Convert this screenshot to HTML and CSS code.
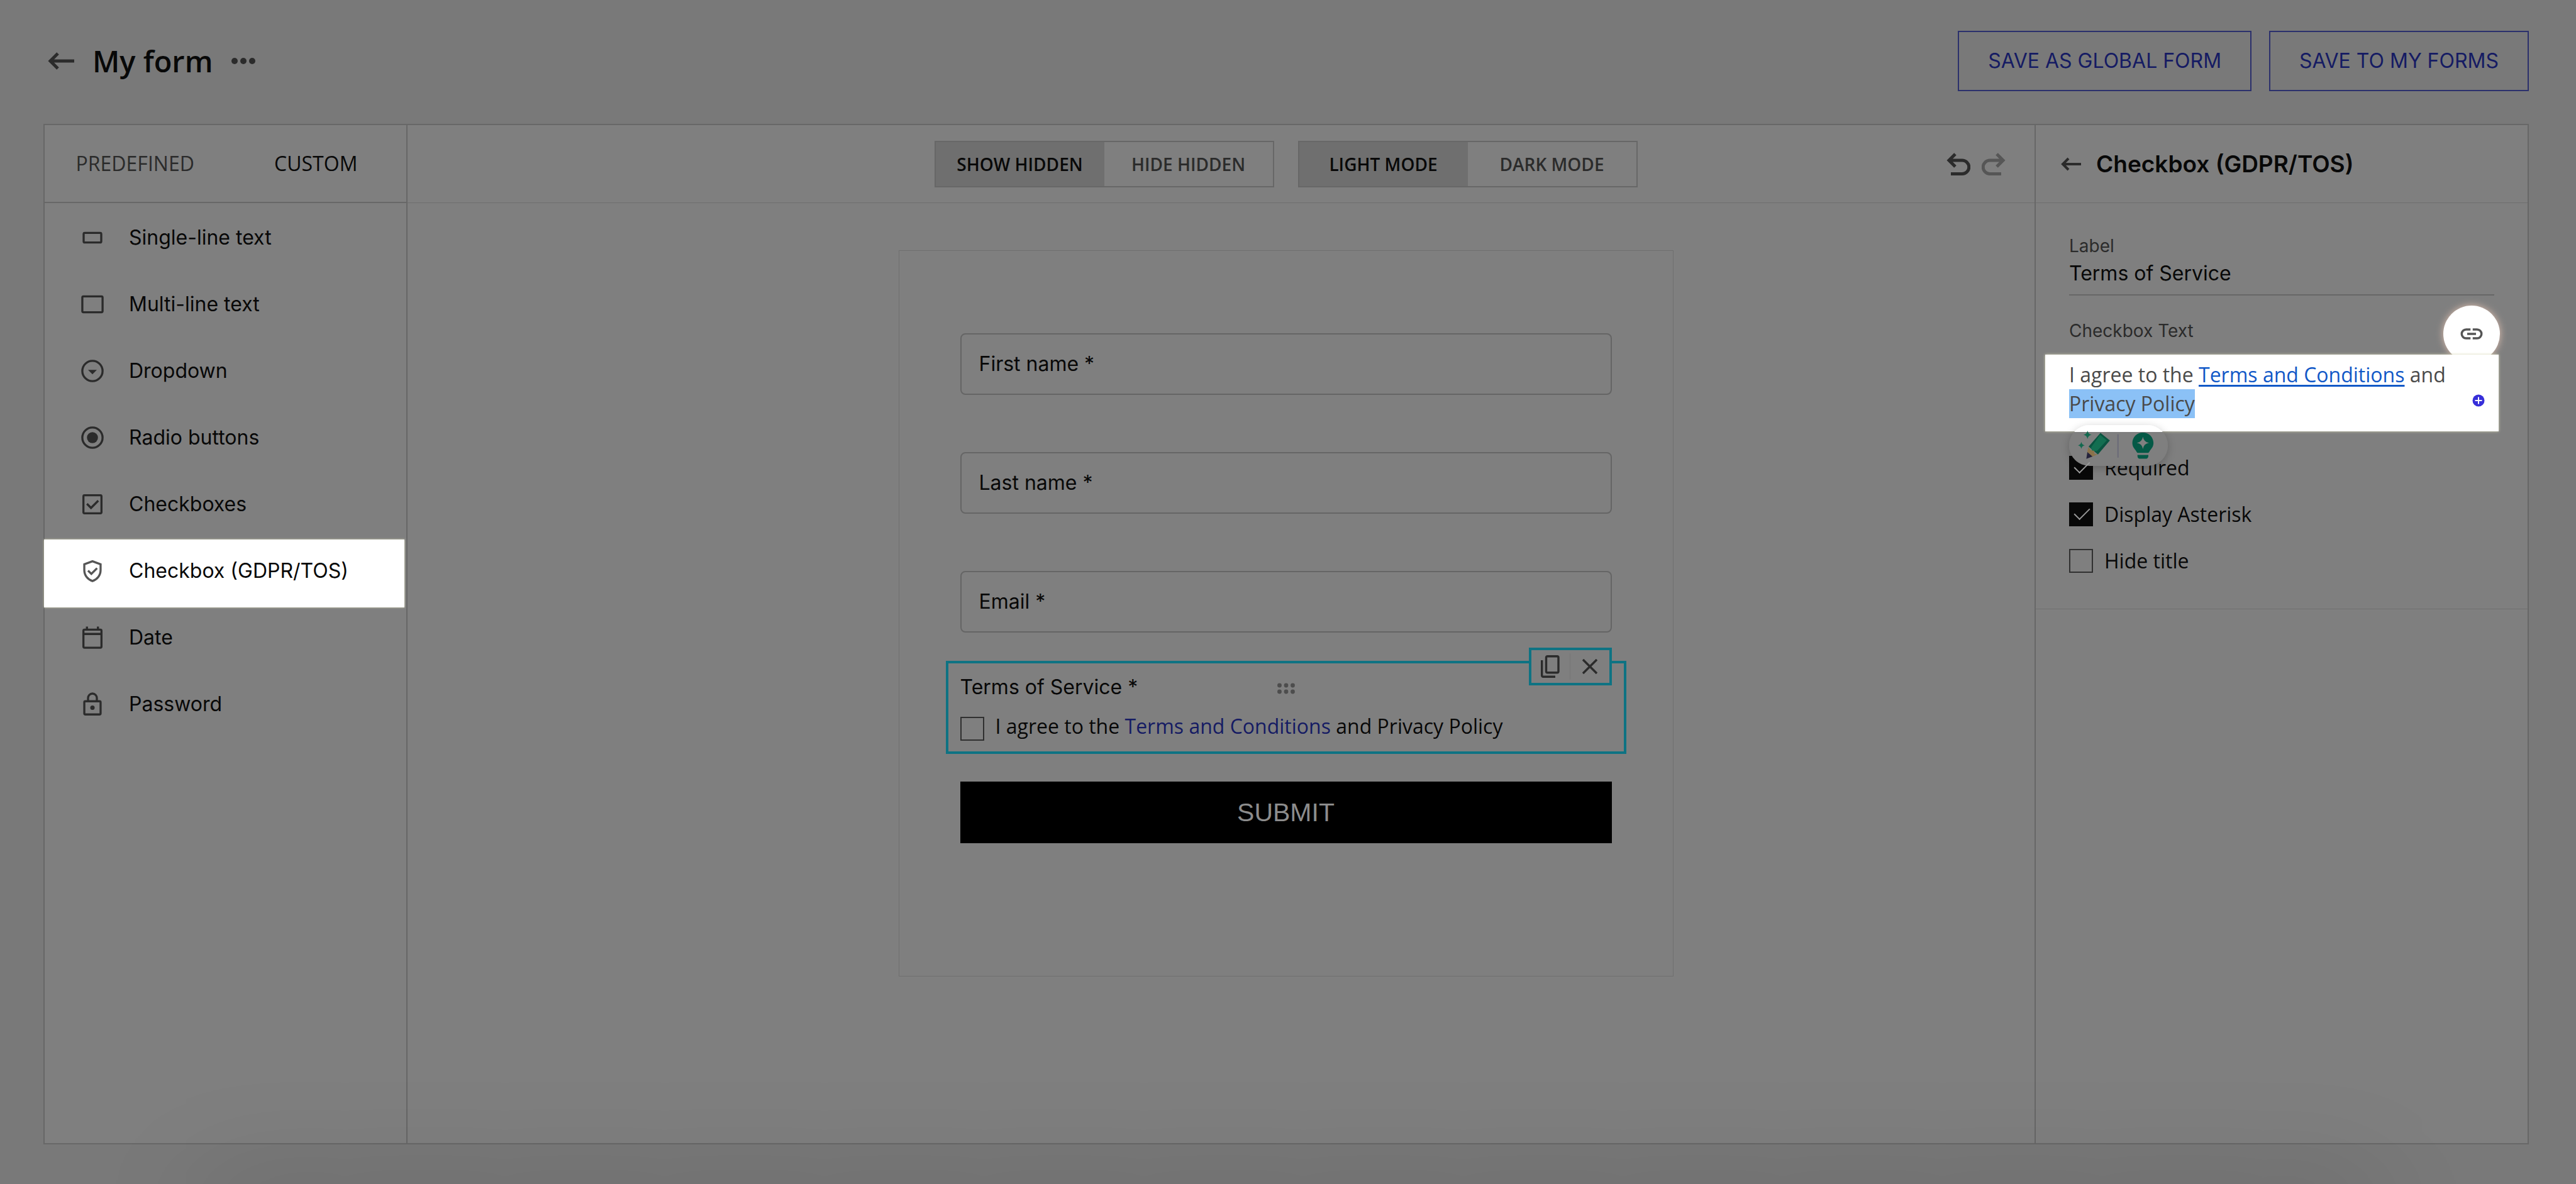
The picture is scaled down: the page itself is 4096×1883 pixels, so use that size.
FILE: index.html
```html
<!DOCTYPE html>
<html lang="en">
<head>
<meta charset="utf-8">
<meta name="viewport" content="width=device-width, initial-scale=1">
<title>My form</title>
<link rel="stylesheet" href="styles.css">
</head>
<body>
<header class="page-header">
  <button class="icon-btn" type="button" aria-label="Back">
    <svg width="42" height="28" viewBox="0 0 42 28" fill="none" stroke="currentColor" stroke-width="5"><path d="M42 14H4M16 2 4 14l12 12"/></svg>
  </button>
  <h1 class="page-title">My form</h1>
  <button class="icon-btn" type="button" aria-label="More options">
    <svg width="40" height="12" viewBox="0 0 40 12" fill="currentColor"><circle cx="6" cy="6" r="5"/><circle cx="20" cy="6" r="5"/><circle cx="34" cy="6" r="5"/></svg>
  </button>
  <div class="page-actions">
    <button class="outline-btn" type="button">SAVE AS GLOBAL FORM</button>
    <button class="outline-btn" type="button">SAVE TO MY FORMS</button>
  </div>
</header>

<main class="builder">
  <aside class="sidebar">
    <nav class="tabs">
      <button class="tab" type="button">PREDEFINED</button>
      <button class="tab tab-active" type="button">CUSTOM</button>
    </nav>
    <ul class="elements">
      <li><button class="element" type="button">
        <svg class="element-icon" viewBox="0 0 24 24"><rect x="4" y="7.6" width="16" height="8.8" rx="1"/></svg>Single-line text</button></li>
      <li><button class="element" type="button">
        <svg class="element-icon" viewBox="0 0 24 24"><rect x="2.8" y="4.8" width="18.4" height="14.4" rx="1"/></svg>Multi-line text</button></li>
      <li><button class="element" type="button">
        <svg class="element-icon" viewBox="0 0 24 24"><circle cx="12" cy="12" r="9.2"/><path class="solid" d="M8 11h8l-4 4z"/></svg>Dropdown</button></li>
      <li><button class="element" type="button">
        <svg class="element-icon" viewBox="0 0 24 24"><circle cx="12" cy="12" r="9.2"/><circle class="solid" cx="12" cy="12" r="5"/></svg>Radio buttons</button></li>
      <li><button class="element" type="button">
        <svg class="element-icon" viewBox="0 0 24 24"><rect x="3.8" y="3.8" width="16.4" height="16.4" rx="1"/><path d="m7 11.6 3.7 3.7 6.6-6.6"/></svg>Checkboxes</button></li>
      <li><button class="element element-selected" type="button">
        <svg class="element-icon" viewBox="0 0 24 24"><path d="M12 3.2 4.6 5.9v5.4c0 4.6 3 8.4 7.4 9.9 4.4-1.5 7.4-5.3 7.4-9.9V5.9z"/><path d="m8 11.7 3 3 5.2-5.2"/></svg>Checkbox (GDPR/TOS)</button></li>
      <li><button class="element" type="button">
        <svg class="element-icon" viewBox="0 0 24 24"><rect x="3.8" y="4.8" width="16.4" height="16.4" rx="1"/><path d="M4 8.7h16M7 2v3M17 2v3"/></svg>Date</button></li>
      <li><button class="element" type="button">
        <svg class="element-icon" viewBox="0 0 24 24"><rect x="4.6" y="9.3" width="14.8" height="12" rx="1"/><path d="M8 9V6.3a4 4 0 0 1 8 0V9"/><circle class="solid" cx="12" cy="15.2" r="2"/></svg>Password</button></li>
    </ul>
  </aside>

  <section class="canvas">
    <div class="canvas-bar">
      <div class="toggles">
        <div class="toggle">
          <button class="toggle-option toggle-on" type="button">SHOW HIDDEN</button>
          <button class="toggle-option" type="button">HIDE HIDDEN</button>
        </div>
        <div class="toggle">
          <button class="toggle-option toggle-on" type="button">LIGHT MODE</button>
          <button class="toggle-option" type="button">DARK MODE</button>
        </div>
      </div>
      <div class="history">
        <button class="icon-btn" type="button" aria-label="Undo">
          <svg width="38" height="36" viewBox="0 0 38 36" fill="none" stroke="currentColor" stroke-width="5"><path d="M4 12h21a10.5 10.5 0 0 1 0 21.5H7M14 2 4 12l10 10"/></svg>
        </button>
        <button class="icon-btn icon-faded" type="button" aria-label="Redo">
          <svg width="38" height="36" viewBox="0 0 38 36" fill="none" stroke="currentColor" stroke-width="5"><path d="M34 12H13a10.5 10.5 0 0 0 0 21.5h18M24 2l10 10-10 10"/></svg>
        </button>
      </div>
    </div>
    <div class="canvas-body">
      <form class="form-card">
        <label class="field"><span>First name *</span><input type="text" name="first"></label>
        <label class="field"><span>Last name *</span><input type="text" name="last"></label>
        <label class="field"><span>Email *</span><input type="email" name="email"></label>
        <div class="block-selected">
          <div class="block-title">Terms of Service *
            <svg class="drag-dots" width="28" height="18" viewBox="0 0 28 18" fill="currentColor"><circle cx="3.5" cy="4" r="3.4"/><circle cx="14" cy="4" r="3.4"/><circle cx="24.5" cy="4" r="3.4"/><circle cx="3.5" cy="14" r="3.4"/><circle cx="14" cy="14" r="3.4"/><circle cx="24.5" cy="14" r="3.4"/></svg>
          </div>
          <div class="consent">
            <input class="box" type="checkbox" id="consent">
            <label for="consent">I agree to the <a href="#terms">Terms and Conditions</a> and Privacy Policy</label>
          </div>
          <div class="block-tools">
            <button class="icon-btn tool" type="button" aria-label="Duplicate">
              <svg width="32" height="38" viewBox="0 0 32 38" fill="none" stroke="currentColor" stroke-width="3.4"><rect x="9.5" y="2.7" width="19.5" height="26" rx="2"/><path d="M2.7 9v24.3a2 2 0 0 0 2 2H24"/></svg>
            </button>
            <button class="icon-btn tool" type="button" aria-label="Remove">
              <svg width="24" height="24" viewBox="0 0 24 24" fill="none" stroke="currentColor" stroke-width="3.4"><path d="m1 1 22 22M23 1 1 23"/></svg>
            </button>
          </div>
        </div>
        <button class="submit" type="button">SUBMIT</button>
      </form>
    </div>
  </section>

  <aside class="inspector">
    <div class="inspector-head">
      <button class="icon-btn" type="button" aria-label="Back to elements">
        <svg width="32" height="22" viewBox="0 0 32 22" fill="none" stroke="currentColor" stroke-width="4"><path d="M32 11H3M12 2l-9 9 9 9"/></svg>
      </button>
      <h2 class="inspector-title">Checkbox (GDPR/TOS)</h2>
    </div>
    <div class="settings">
      <label class="setting-label" for="label-input">Label</label>
      <input class="line-input" id="label-input" type="text" value="Terms of Service">
      <div class="setting-label" id="text-label">Checkbox Text</div>
      <div class="editor">
        <div class="editor-text" role="textbox" aria-labelledby="text-label" contenteditable="true" spellcheck="false">I agree to the <a class="editor-link" href="#terms">Terms and Conditions</a> and <mark>Privacy Policy</mark></div>
        <button class="link-btn" type="button" aria-label="Insert link">
          <svg width="42" height="42" viewBox="0 0 24 24" fill="none" stroke="currentColor" stroke-width="2"><path d="M11 8H7a4 4 0 0 0 0 8h4M13 8h4a4 4 0 0 1 0 8h-4M8 12h8"/></svg>
        </button>
        <button class="add-btn" type="button" aria-label="Add">
          <svg width="20" height="20" viewBox="0 0 20 20"><circle cx="10" cy="10" r="9.5" fill="#372fd9"/><path d="M10 4.5v11M4.5 10h11" stroke="#fff" stroke-width="2"/></svg>
        </button>
        <div class="assistant">
          <svg viewBox="168 47 654 271" aria-hidden="true">
            <path d="M290 85q5 23 27 27-22 4-27 27-5-23-27-27 22-4 27-27zM249 158q4 19 22 23-18 4-22 23-4-19-22-23 18-4 22-23z" fill="#13694f"/>
            <path d="m376 99 62 50-79 93-62-52z" fill="#0a5340"/>
            <path d="m373 112 45 36-66 72-32-1-6-24z" fill="#136e51"/>
            <path d="m296 193-8 33 34 30 36-15-22-3-2-20-22-4z" fill="#8b734b"/>
            <path d="m289 226 34 29-41 16z" fill="#25233b"/>
            <path d="M492 108v155" stroke="#6b6b78" stroke-width="9"/>
            <path d="M657 97c-40 0-70 31-70 69 0 25 14 37 25 53 4 7 5 12 12 12h66c7 0 8-5 12-12 11-16 25-28 25-53 0-38-30-69-70-69zM621 245h72v8q-3 17-14 17h-44q-12 0-14-17z" fill="#045946"/>
            <path d="M657 125q6 34 40 40-34 6-40 40-6-34-40-40 34-6 40-40z" fill="#808080"/>
          </svg>
        </div>
      </div>
      <div class="options">
        <label class="option"><input class="box" type="checkbox" checked>Required</label>
        <label class="option"><input class="box" type="checkbox" checked>Display Asterisk</label>
        <label class="option"><input class="box" type="checkbox">Hide title</label>
      </div>
    </div>
  </aside>
</main>
</body>
</html>
```
FILE: styles.css
```css
:root {
  --page: #797979;
  --surface: #7f7f7f;
  --line: #676767;
  --line-soft: #6f6f6f;
  --ink: #080808;
  --ink-soft: #2b2b2b;
  --brand: #151b63;
  --select: #0e7383;
  --inter: Inter, "Liberation Sans", sans-serif;
  --open: "Open Sans", "Noto Sans", sans-serif;
}

* { box-sizing: border-box; }

body {
  margin: 0;
  min-height: 100vh;
  display: flex;
  flex-direction: column;
  overflow: hidden;
  background: var(--page);
  color: var(--ink);
  font: 400 32px/40px var(--inter);
}

body::after {
  content: "";
  position: fixed;
  left: 320px;
  right: 320px;
  bottom: -60px;
  height: 40px;
  box-shadow: 0 0 180px 10px rgba(0, 0, 0, .2);
  pointer-events: none;
}

button, input {
  margin: 0;
  padding: 0;
  border: 0;
  background: none;
  color: inherit;
  font: inherit;
}

svg { display: block; }

.icon-btn { color: var(--ink-soft); }
.icon-faded { color: #565656; }

/* Page header */
.page-header {
  display: flex;
  align-items: center;
  padding: 49px 75px 52px 76px;
}

.page-title {
  margin: 0 28px 0 29px;
  font: 600 47px/64px var(--open);
}

.page-actions {
  display: flex;
  gap: 28px;
  margin-left: auto;
}

.outline-btn {
  height: 96px;
  padding: 0 46px;
  border: 2px solid #2b306c;
  color: var(--brand);
}

/* Builder frame */
.builder {
  flex: 1;
  display: grid;
  grid-template-columns: 577px 1fr 784px;
  margin: 0 75px 63px 69px;
  border: 2px solid var(--line);
  background: var(--surface);
}

/* Element list */
.sidebar { border-right: 2px solid var(--line); }

.tabs {
  display: grid;
  grid-template-columns: 1fr 1fr;
  height: 124px;
  border-bottom: 2px solid var(--line);
}

.tab {
  color: var(--ink-soft);
  font-family: var(--open);
}

.tab-active { color: var(--ink); }

.elements {
  margin: 0;
  padding: 2px 0 0;
  list-style: none;
}

.element {
  position: relative;
  isolation: isolate;
  display: flex;
  align-items: center;
  gap: 37px;
  width: 100%;
  height: 106px;
  padding-left: 55px;
  text-align: left;
}

.element-icon {
  width: 42px;
  height: 42px;
  fill: none;
  stroke: var(--ink-soft);
  stroke-width: 1.9;
}

.element-icon .solid {
  fill: var(--ink-soft);
  stroke: none;
}

.element-selected::before {
  content: "";
  position: absolute;
  z-index: -1;
  inset: 3px 3px -5px -1px;
  background: #fff;
  box-shadow: 0 0 3px #d6d6b4;
}

.element-selected .element-icon { stroke: #555; }

/* Canvas */
.canvas-bar {
  display: grid;
  grid-template-columns: 1fr auto 1fr;
  align-items: center;
  height: 124px;
  padding: 0 46px 0 252px;
  border-bottom: 1px solid var(--line-soft);
}

.toggles {
  grid-column: 2;
  display: flex;
  gap: 38px;
}

.toggle {
  display: grid;
  grid-template-columns: 1fr 1fr;
  width: 540px;
  height: 74px;
  border: 2px solid var(--line);
}

.toggle-option {
  color: var(--ink-soft);
  font: 600 28px/40px var(--open);
}

.toggle-on {
  background: #6f6f6f;
  color: var(--ink);
}

.history {
  justify-self: end;
  display: flex;
  gap: 18px;
}

.canvas-body {
  display: flex;
  justify-content: center;
  padding: 75px 0 75px 206px;
}

.form-card {
  width: 1232px;
  padding: 131px 97px 211px;
  border: 1px solid var(--line-soft);
}

.field {
  display: flex;
  align-items: center;
  gap: 16px;
  height: 98px;
  padding: 0 28px;
  border: 2px solid #656565;
  border-radius: 8px;
}

.field + .field { margin-top: 91px; }

.field input {
  flex: 1;
  min-width: 0;
}

.block-selected {
  position: relative;
  margin: 45px -23px 44px;
  padding: 18px 19px 17px;
  border: 4px solid var(--select);
}

.drag-dots {
  position: absolute;
  top: 31px;
  left: 50%;
  margin-left: -14px;
  color: #4d4d4d;
}

.consent {
  display: flex;
  gap: 18px;
  margin-top: 19px;
  font: 400 32px/46px var(--open);
}

.consent .box { margin-top: 8px; }

.consent a {
  color: var(--brand);
  text-decoration: none;
}

.block-tools {
  position: absolute;
  top: -25px;
  right: 19px;
  display: flex;
  width: 132px;
  height: 60px;
  border: 4px solid var(--select);
  background: var(--surface);
}

.tool {
  flex: 1;
  display: grid;
  place-items: center;
}

.tool + .tool {
  margin: 5px 0;
  border-left: 1px solid #767676;
}

.submit {
  display: block;
  width: 100%;
  height: 98px;
  background: #000;
  color: #8c8c8c;
  font: 400 41px/48px "Liberation Sans", Arial, sans-serif;
}

/* Checkbox control */
.box {
  appearance: none;
  flex: none;
  width: 38px;
  height: 38px;
  border: 2px solid #303030;
}

.box:checked {
  border-color: var(--ink);
  background: var(--ink);
}

.box:checked::after {
  content: "";
  display: block;
  width: 11px;
  height: 22px;
  margin: 1px 0 0 12px;
  border: solid #9a9a9a;
  border-width: 0 2px 2px 0;
  rotate: 45deg;
}

/* Inspector */
.inspector { border-left: 2px solid var(--line); }

.inspector-head {
  display: flex;
  align-items: center;
  gap: 24px;
  height: 124px;
  padding: 0 40px;
  border-bottom: 1px solid var(--line-soft);
}

.inspector-title {
  margin: 0;
  font: 600 37px/48px var(--inter);
}

.settings {
  padding: 51px 53px 39px;
  border-bottom: 1px solid var(--line-soft);
}

.setting-label {
  display: block;
  color: var(--ink-soft);
  font-size: 28px;
  line-height: 34px;
}

.line-input {
  display: block;
  width: 100%;
  height: 56px;
  margin: 6px 0 39px;
  padding-bottom: 14px;
  border-bottom: 2px solid var(--line);
}

.editor {
  position: relative;
  isolation: isolate;
  margin-top: 30px;
  padding-bottom: 13px;
  border-bottom: 1px solid #c0c0c0;
  color: #4a4a4a;
  font: 400 32px/46px var(--open);
}

.editor::before {
  content: "";
  position: absolute;
  z-index: -1;
  inset: -9px -7px -8px -38px;
  background: #fff;
  box-shadow: 0 0 4px #d6d6b4;
}

.editor-link {
  color: #1158c7;
  text-decoration-thickness: 3px;
  text-underline-offset: 4px;
}

.editor mark {
  display: inline-block;
  background: #8bc1f6;
  color: inherit;
}

.link-btn {
  position: absolute;
  z-index: -2;
  top: -87px;
  right: -9px;
  display: grid;
  place-items: center;
  width: 90px;
  height: 90px;
  border-radius: 50%;
  background: #fff;
  box-shadow: 0 0 12px #e0c0b0;
  color: #555;
}

.add-btn {
  position: absolute;
  top: 54px;
  right: 15px;
}

.assistant {
  position: absolute;
  top: 103px;
  left: 0;
  width: 157px;
  height: 65px;
  border-radius: 33px;
  background: linear-gradient(#fff 11px, var(--surface) 11px);
  box-shadow: 0 3px 14px rgba(0, 0, 0, .22);
}

.options {
  display: grid;
  padding-top: 28px;
}

.option {
  display: flex;
  align-items: center;
  gap: 18px;
  height: 74px;
  font-family: var(--open);
}
```
